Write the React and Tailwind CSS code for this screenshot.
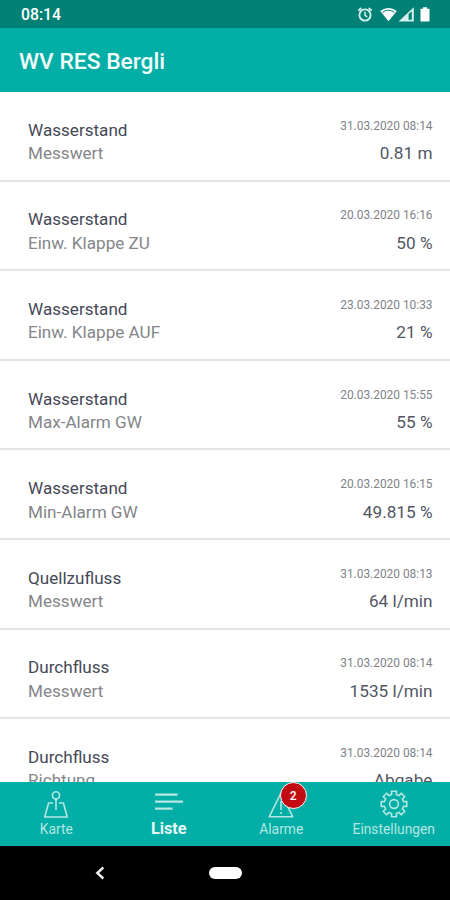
const readings = [
  { name: 'Wasserstand', detail: 'Messwert', time: '31.03.2020 08:14', value: '0.81 m' },
  { name: 'Wasserstand', detail: 'Einw. Klappe ZU', time: '20.03.2020 16:16', value: '50 %' },
  { name: 'Wasserstand', detail: 'Einw. Klappe AUF', time: '23.03.2020 10:33', value: '21 %' },
  { name: 'Wasserstand', detail: 'Max-Alarm GW', time: '20.03.2020 15:55', value: '55 %' },
  { name: 'Wasserstand', detail: 'Min-Alarm GW', time: '20.03.2020 16:15', value: '49.815 %' },
  { name: 'Quellzufluss', detail: 'Messwert', time: '31.03.2020 08:13', value: '64 l/min' },
  { name: 'Durchfluss', detail: 'Messwert', time: '31.03.2020 08:14', value: '1535 l/min' },
  { name: 'Durchfluss', detail: 'Richtung', time: '31.03.2020 08:14', value: 'Abgabe' },
];

/** Outline of an eight-toothed gear centred on 14,14 */
function gearPath() {
  const corners = [[-14, 9.8], [-11, 13], [11, 13], [14, 9.8]];
  const points = [];
  for (let tooth = 0; tooth < 8; tooth++) {
    corners.forEach(([offset, radius]) => {
      const angle = ((tooth * 45 + offset) * Math.PI) / 180;
      points.push(`${(14 + radius * Math.sin(angle)).toFixed(2)} ${(14 - radius * Math.cos(angle)).toFixed(2)}`);
    });
  }
  return `M${points.join('L')}Z`;
}

function NavIcon({ children }) {
  return (
    <svg
      viewBox="0 0 28 28"
      className="size-7"
      fill="none"
      stroke="currentColor"
      strokeWidth="1.6"
      strokeLinejoin="round"
      aria-hidden="true"
    >
      {children}
    </svg>
  );
}

function StatusBar() {
  return (
    <div className="flex h-7 shrink-0 items-center justify-between bg-[#018176] pt-[2px] pr-[17px] pl-[21px] text-white">
      <span className="text-[15.8px] leading-none font-medium">08:14</span>
      <svg viewBox="0 0 76 18" className="h-[18px] w-[76px]" aria-hidden="true">
        <g fill="none" stroke="#d5f0ed" strokeWidth="1.9">
          <circle cx="8" cy="9" r="5.6" />
          <path d="M8 5.8V9.3L10.3 10.9" strokeWidth="1.5" />
          <path d="M1.3 4.6L4.3 2M14.7 4.6L11.7 2" />
        </g>
        <path d="M23.2 5Q31.5-.9 39.8 5L31.5 15.2Z" fill="white" />
        <path d="M25.5 6.2Q31.5 2.2 37.5 6.2" fill="none" stroke="#018176" strokeWidth="1" />
        <path d="M41.5 15.5L56.8 1.2V15.5Z" fill="#d5f0ed" />
        <path d="M51.6 8.1L54.8 5.2V13.8H51.6Z" fill="#018176" />
        <path d="M66 1.2H70V2.7H72.5V15.5H63.5V2.7H66Z" fill="white" />
      </svg>
    </div>
  );
}

function ReadingRow({ name, detail, time, value }) {
  return (
    <li className="flex h-[89.6px] shrink-0 justify-between border-b-2 border-[#e4e5e6] pt-[26.9px] pr-[17.5px] pl-7">
      <div className="text-[17.1px] leading-[23.4px]">
        <p className="text-[#454957]">{name}</p>
        <p className="text-[#84868a]">{detail}</p>
      </div>
      <div className="text-right">
        <p className="h-[23.4px] text-[11.9px] leading-[15px] text-[#808388]">{time}</p>
        <p className="text-[17.2px] leading-[23.4px] text-[#525664]">{value}</p>
      </div>
    </li>
  );
}

function TabBar() {
  return (
    <nav className="grid h-16 shrink-0 grid-cols-4 bg-[#02aea5] text-[13.8px] leading-4 text-[#b5e7e4]">
      <div className="flex flex-col items-center pt-2">
        <NavIcon>
          <circle cx="14" cy="5.3" r="3.6" />
          <path d="M14 9V20M11 13H6.6L2.7 27H25.3L21.4 13H17" />
        </NavIcon>
        <span className="mt-[3px]">Karte</span>
      </div>
      <div className="flex flex-col items-center pt-2">
        <NavIcon>
          <path d="M0 4.6H22.5M0 11.6H28M0 18.6H17.5" strokeWidth="2.4" />
        </NavIcon>
        <span className="mt-[3px] text-[16.2px] leading-4 font-bold text-[#e8f8f7]">Liste</span>
      </div>
      <div className="flex flex-col items-center pt-2">
        <div className="relative">
          <NavIcon>
            <path d="M14 3L2.3 26.7H25.7ZM14 11V20M14 22V24" />
          </NavIcon>
          <span className="absolute -top-2 left-[12.5px] flex size-[27px] items-center justify-center rounded-full border-[1.5px] border-white bg-[#c00c12] text-xs font-medium text-white">
            2
          </span>
        </div>
        <span className="mt-[3px]">Alarme</span>
      </div>
      <div className="flex flex-col items-center pt-2">
        <NavIcon>
          <path d={gearPath()} />
          <circle cx="14" cy="14" r="4.4" />
        </NavIcon>
        <span className="mt-[3px]">Einstellungen</span>
      </div>
    </nav>
  );
}

function SystemNav() {
  return (
    <div className="grid h-[54px] shrink-0 grid-cols-[200px_51px_1fr] items-center bg-black">
      <svg viewBox="0 0 10 14" className="ml-[95px] h-[14px] w-[10px]" aria-hidden="true">
        <path d="M8.3 1.5L2.3 7L8.3 12.5" fill="none" stroke="#eee" strokeWidth="2.4" />
      </svg>
      <div className="ml-[9px] h-3 w-[33px] rounded-full bg-white" />
    </div>
  );
}

export default function App() {
  return (
    <div className="flex h-[900px] w-[450px] flex-col overflow-hidden bg-white font-['Roboto',sans-serif]">
      <StatusBar />
      <header className="flex h-16 shrink-0 items-center bg-[#02aea5] pt-[4px] pl-[19px]">
        <h1 className="text-[22.8px] leading-none font-medium text-[#f2fcfb]">WV RES Bergli</h1>
      </header>
      <ul className="flex min-h-0 flex-1 flex-col overflow-hidden">
        {readings.map((reading, i) => (
          <ReadingRow key={i} {...reading} />
        ))}
      </ul>
      <TabBar />
      <SystemNav />
    </div>
  );
}
